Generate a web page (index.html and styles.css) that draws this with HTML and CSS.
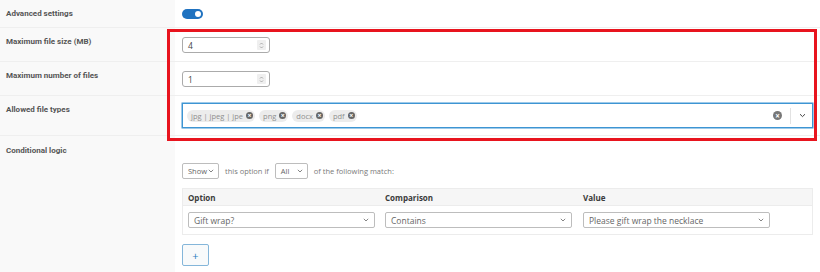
FILE: index.html
```html
<!DOCTYPE html>
<html lang="en">
<head>
  <meta charset="UTF-8" />
  <meta name="viewport" content="width=device-width, initial-scale=1" />
  <title>Product option settings</title>
  <link rel="stylesheet" href="styles.css">
</head>
<body>
  <div class="settings">
    <div class="row row-toggle">
      <div class="label">Advanced settings</div>
      <div class="field">
        <span class="toggle"><span class="knob"></span></span>
      </div>
    </div>

    <div class="row row-input">
      <div class="label">Maximum file size (MB)</div>
      <div class="field">
        <div class="number">
          <span>4</span>
          <span class="spin">
            <svg width="5" height="7" viewBox="0 0 5 7"><path d="M1 2.5 2.5 1 4 2.5M1 4.5 2.5 6 4 4.5" fill="none" stroke="#999" stroke-width=".8"/></svg>
          </span>
        </div>
      </div>
    </div>

    <div class="row row-input">
      <div class="label">Maximum number of files</div>
      <div class="field">
        <div class="number">
          <span>1</span>
          <span class="spin">
            <svg width="5" height="7" viewBox="0 0 5 7"><path d="M1 2.5 2.5 1 4 2.5M1 4.5 2.5 6 4 4.5" fill="none" stroke="#999" stroke-width=".8"/></svg>
          </span>
        </div>
      </div>
    </div>

    <div class="row row-tags">
      <div class="label">Allowed file types</div>
      <div class="field">
        <div class="tags">
          <div class="chips" id="chips"></div>
          <span class="clear">&times;</span>
          <span class="sep"></span>
          <svg class="caret" width="7" height="5" viewBox="0 0 7 5"><path d="M1 1.2 3.5 3.6 6 1.2" fill="none" stroke="#444" stroke-width="1"/></svg>
        </div>
      </div>
    </div>

    <div class="row row-logic">
      <div class="label">Conditional logic</div>
      <div class="field">
        <div class="logic-line">
          <div class="select small sel-show">Show <svg width="6" height="4" viewBox="0 0 6 4"><path d="M.8 .8 3 3 5.2 .8" fill="none" stroke="#666" stroke-width=".8"/></svg></div>
          <span class="muted">this option if</span>
          <div class="select small sel-all">All <svg width="6" height="4" viewBox="0 0 6 4"><path d="M.8 .8 3 3 5.2 .8" fill="none" stroke="#666" stroke-width=".8"/></svg></div>
          <span class="muted">of the following match:</span>
        </div>

        <div class="rules">
          <div class="rules-head">
            <div>Option</div>
            <div>Comparison</div>
            <div>Value</div>
          </div>
          <div class="rules-row">
            <div class="cell"><div class="select wide">Gift wrap? <svg width="6" height="4" viewBox="0 0 6 4"><path d="M.8 .8 3 3 5.2 .8" fill="none" stroke="#666" stroke-width=".8"/></svg></div></div>
            <div class="cell"><div class="select wide">Contains <svg width="6" height="4" viewBox="0 0 6 4"><path d="M.8 .8 3 3 5.2 .8" fill="none" stroke="#666" stroke-width=".8"/></svg></div></div>
            <div class="cell"><div class="select wide">Please gift wrap the necklace <svg width="6" height="4" viewBox="0 0 6 4"><path d="M.8 .8 3 3 5.2 .8" fill="none" stroke="#666" stroke-width=".8"/></svg></div></div>
          </div>
        </div>

        <button class="add">+</button>
      </div>
    </div>

    <div class="highlight"></div>
  </div>

  <script>
    const types = ['jpg | jpeg | jpe', 'png', 'docx', 'pdf'];
    const chips = document.getElementById('chips');
    types.forEach((t) => {
      const chip = document.createElement('span');
      chip.className = 'chip';
      chip.innerHTML = `${t}<span class="x">&times;</span>`;
      chips.appendChild(chip);
    });
  </script>
</body>
</html>
```

FILE: styles.css
```css
body {
  margin: 0;
  font-family: 'Open Sans', sans-serif;
  font-size: 8px;
  color: #3c434a;
  background: #fff;
}

.settings {
  position: relative;
  width: 820px;
  height: 272px;
  overflow: hidden;
}

.row {
  display: grid;
  grid-template-columns: 175px 1fr;
  border-bottom: 1px solid #efefef;
}

.label {
  background: #f9f9f9;
  padding: 8px 6px 0;
  line-height: 12px;
  font-family: Roboto, sans-serif;
  font-size: 8px;
  font-weight: 700;
  color: #555;
}

.field {
  padding: 0 7px;
}

.row-toggle { height: 27px; }
.row-toggle .field { padding-top: 9px; }

.toggle {
  display: flex;
  justify-content: flex-end;
  align-items: center;
  width: 21px;
  height: 10px;
  border-radius: 5px;
  background: #1f72c0;
  padding: 0 2px;
  box-sizing: border-box;
}

.knob {
  width: 6px;
  height: 6px;
  border-radius: 50%;
  background: #fff;
}

.row-input { height: 33px; }
.row-input .field { padding-top: 9px; }

.number {
  display: flex;
  align-items: center;
  justify-content: space-between;
  width: 88px;
  height: 16px;
  box-sizing: border-box;
  border: 1px solid #ababab;
  border-radius: 3px;
  padding: 0 3px 0 5px;
  color: #444;
  font-size: 8.5px;
}

.spin {
  display: flex;
  align-items: center;
  justify-content: center;
  width: 9px;
  height: 10px;
  background: #efefef;
  border-radius: 1px;
}

.row-tags { height: 39px; }
.row-tags .field { padding-top: 7px; }

.tags {
  display: flex;
  align-items: center;
  height: 25px;
  box-sizing: border-box;
  border: 1px solid #3d95d3;
  box-shadow: 0 0 0 0.5px #3d95d3;
  padding: 0 6px 0 4px;
}

.chips {
  display: flex;
  gap: 4px;
  flex: 1;
}

.chip {
  display: inline-flex;
  align-items: center;
  gap: 3px;
  height: 12px;
  padding: 0 2px 0 4px;
  border-radius: 6px;
  background: #ececec;
  color: #8f8f8f;
  font-size: 7.5px;
}

.chip .x,
.clear {
  display: inline-flex;
  align-items: center;
  justify-content: center;
  border-radius: 50%;
  background: #666;
  color: #fff;
  font-weight: 700;
}

.chip .x {
  width: 7px;
  height: 7px;
  font-size: 7px;
  line-height: 7px;
}

.clear {
  width: 9px;
  height: 9px;
  font-size: 8px;
  line-height: 9px;
  background: #777;
}

.sep {
  width: 1px;
  height: 16px;
  background: #e2e2e2;
  margin: 0 8px;
}

.row-logic {
  border-bottom: none;
  height: 136px;
}

.row-logic .label { padding-top: 9px; }
.row-logic .field { padding-top: 27px; }

.logic-line {
  display: flex;
  align-items: center;
  gap: 6px;
}

.muted {
  color: #7a7a7a;
  font-size: 7.5px;
}

.select {
  display: flex;
  align-items: center;
  justify-content: space-between;
  height: 16px;
  box-sizing: border-box;
  border: 1px solid #bdbdbd;
  border-radius: 2px;
  padding: 0 5px;
  color: #666;
  font-size: 8.5px;
}

.select.small {
  padding: 0 4px 0 5px;
  font-size: 7.5px;
}

.sel-show { width: 37px; }
.sel-all { width: 33px; }

.rules {
  margin-top: 9px;
  border: 1px solid #ececec;
}

.rules-head,
.rules-row {
  display: grid;
  grid-template-columns: 197px 198px 1fr;
}

.rules-head {
  height: 16px;
  align-items: center;
  background: #f6f6f6;
  font-weight: 700;
  color: #3a3a3a;
}

.rules-head div { padding-left: 5px; }

.rules-row {
  height: 28px;
  border-top: 1px solid #ececec;
  align-items: center;
}

.cell { padding-left: 5px; }

.select.wide { width: 187px; }

.add {
  display: block;
  margin-top: 9px;
  width: 27px;
  height: 22px;
  border: 1px solid #84b6da;
  border-radius: 2px;
  background: #f8fafb;
  color: #2d7fc0;
  font-family: 'Open Sans', sans-serif;
  font-size: 11px;
  line-height: 1;
  padding: 0;
}

/* red annotation frame drawn over the three file rows */
.highlight {
  position: absolute;
  left: 167px;
  top: 29px;
  width: 650px;
  height: 112px;
  box-sizing: border-box;
  border: 3px solid #e8141e;
  pointer-events: none;
}
```
